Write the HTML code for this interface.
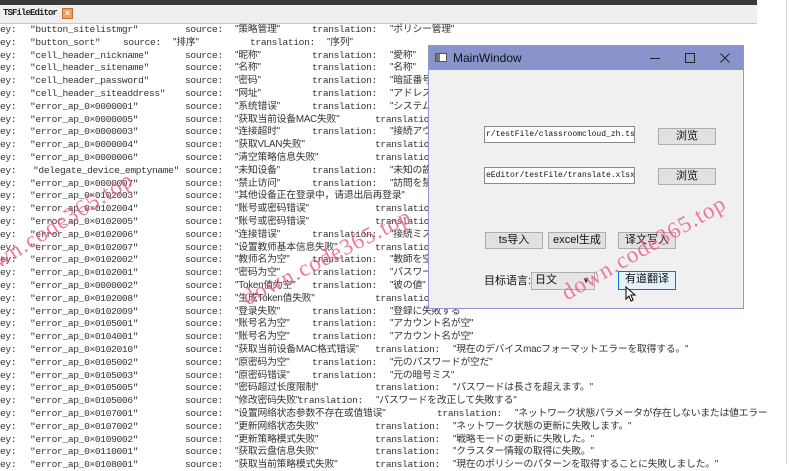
<!DOCTYPE html>
<html><head><meta charset="utf-8"><style>
body{margin:0;width:790px;height:464px;overflow:hidden;background:#fff;position:relative;font-family:"Liberation Mono","Noto Sans CJK SC",monospace;}
.top{position:absolute;left:0;top:0;width:757px;height:5px;background:#3a3a3a}
.tabbar{position:absolute;left:0;top:5px;width:757px;height:18px;background:#efeff1;border-bottom:1px solid #c8c8c8}
.tab{position:absolute;left:3px;top:3px;font:bold 9px "Liberation Mono",monospace;color:#222;letter-spacing:-0.9px;white-space:nowrap}
.tabx{position:absolute;left:62px;top:3px;width:11px;height:11px;background:#f0a060;border:1px solid #c07030;color:#fff;font:bold 9px/9px "Liberation Sans",sans-serif;text-align:center;box-sizing:border-box}
.rline{position:absolute;left:786px;top:0;width:1px;height:464px;background:#d8d8d8}
.r{position:absolute;left:0;height:13px;width:790px;font-size:9.6px;line-height:13px;color:#333;white-space:nowrap;letter-spacing:-0.35px}
.r span{position:absolute;top:0}
.c{font-family:"Liberation Sans","Noto Sans CJK SC",sans-serif;font-size:9.8px;letter-spacing:-0.2px}
.win{position:absolute;left:428px;top:45px;width:316px;height:264px;background:#f0f0f0;border:1px solid #8f98cf;box-sizing:border-box}
.tb{position:absolute;left:0;top:0;width:100%;height:24px;background:#8a94cc}
.tb .t{position:absolute;left:24px;top:5px;font:12px "Liberation Sans",sans-serif;color:#111}
.inp{position:absolute;background:#fff;border:1px solid #8a8a8a;box-sizing:border-box;font:8px/15px "Liberation Mono",monospace;color:#111;padding-left:1px;overflow:hidden;white-space:nowrap;letter-spacing:0}
.btn{position:absolute;background:#e1e1e1;border:1px solid #adadad;box-sizing:border-box;font:11px/15px "Liberation Sans","Noto Sans CJK SC",sans-serif;color:#111;text-align:center}
.wm{position:absolute;font:23px "Liberation Serif",serif;color:rgba(235,90,140,0.8);transform-origin:left bottom;white-space:nowrap;letter-spacing:1px}
</style></head><body>
<div class="top"></div>
<div class="tabbar"><div class="tab">TSFileEditor</div><div class="tabx">×</div></div>
<div class="rline"></div>

<div class="r" style="top:23px"><span>ey:</span><span style="left:30px">"button_sitelistmgr"</span><span style="left:185px">source:</span><span class="c" style="left:235px">"策略管理"</span><span style="left:312px">translation:</span><span class="c" style="left:390px">"ポリシー管理"</span></div>
<div class="r" style="top:36px"><span>ey:</span><span style="left:30px">"button_sort"</span><span style="left:123px">source:</span><span class="c" style="left:173px">"排序"</span><span style="left:250px">translation:</span><span class="c" style="left:327px">"序列"</span></div>
<div class="r" style="top:49px"><span>ey:</span><span style="left:30px">"cell_header_nickname"</span><span style="left:185px">source:</span><span class="c" style="left:235px">"昵称"</span><span style="left:312px">translation:</span><span class="c" style="left:390px">"愛称"</span></div>
<div class="r" style="top:61px"><span>ey:</span><span style="left:30px">"cell_header_sitename"</span><span style="left:185px">source:</span><span class="c" style="left:235px">"名称"</span><span style="left:312px">translation:</span><span class="c" style="left:390px">"名称"</span></div>
<div class="r" style="top:74px"><span>ey:</span><span style="left:30px">"cell_header_password"</span><span style="left:185px">source:</span><span class="c" style="left:235px">"密码"</span><span style="left:312px">translation:</span><span class="c" style="left:390px">"暗証番号"</span></div>
<div class="r" style="top:87px"><span>ey:</span><span style="left:30px">"cell_header_siteaddress"</span><span style="left:185px">source:</span><span class="c" style="left:235px">"网址"</span><span style="left:312px">translation:</span><span class="c" style="left:390px">"アドレス"</span></div>
<div class="r" style="top:100px"><span>ey:</span><span style="left:30px">"error_ap_0×0000001"</span><span style="left:185px">source:</span><span class="c" style="left:235px">"系统错误"</span><span style="left:312px">translation:</span><span class="c" style="left:390px">"システム"</span></div>
<div class="r" style="top:113px"><span>ey:</span><span style="left:30px">"error_ap_0×0000005"</span><span style="left:185px">source:</span><span class="c" style="left:235px">"获取当前设备MAC失败"</span><span style="left:375px">translation:</span></div>
<div class="r" style="top:125px"><span>ey:</span><span style="left:30px">"error_ap_0×0000003"</span><span style="left:185px">source:</span><span class="c" style="left:235px">"连接超时"</span><span style="left:312px">translation:</span><span class="c" style="left:390px">"接続アウト"</span></div>
<div class="r" style="top:138px"><span>ey:</span><span style="left:30px">"error_ap_0×0000004"</span><span style="left:185px">source:</span><span class="c" style="left:235px">"获取VLAN失败"</span><span style="left:375px">translation:</span></div>
<div class="r" style="top:151px"><span>ey:</span><span style="left:30px">"error_ap_0×0000006"</span><span style="left:185px">source:</span><span class="c" style="left:235px">"清空策略信息失败"</span><span style="left:375px">translation:</span></div>
<div class="r" style="top:164px"><span>ey:</span><span style="left:33px">"delegate_device_emptyname"</span><span style="left:185px">source:</span><span class="c" style="left:235px">"未知设备"</span><span style="left:312px">translation:</span><span class="c" style="left:390px">"未知の設備"</span></div>
<div class="r" style="top:177px"><span>ey:</span><span style="left:30px">"error_ap_0×0000007"</span><span style="left:185px">source:</span><span class="c" style="left:235px">"禁止访问"</span><span style="left:312px">translation:</span><span class="c" style="left:390px">"訪問を禁止"</span></div>
<div class="r" style="top:189px"><span>ey:</span><span style="left:30px">"error_ap_0×0102003"</span><span style="left:185px">source:</span><span class="c" style="left:235px">"其他设备正在登录中，请退出后再登录"</span></div>
<div class="r" style="top:202px"><span>ey:</span><span style="left:30px">"error_ap_0×0102004"</span><span style="left:185px">source:</span><span class="c" style="left:235px">"账号或密码错误"</span><span style="left:375px">translation:</span></div>
<div class="r" style="top:215px"><span>ey:</span><span style="left:30px">"error_ap_0×0102005"</span><span style="left:185px">source:</span><span class="c" style="left:235px">"账号或密码错误"</span><span style="left:375px">translation:</span></div>
<div class="r" style="top:228px"><span>ey:</span><span style="left:30px">"error_ap_0×0102006"</span><span style="left:185px">source:</span><span class="c" style="left:235px">"连接错误"</span><span style="left:312px">translation:</span><span class="c" style="left:390px">"接続ミス"</span></div>
<div class="r" style="top:241px"><span>ey:</span><span style="left:30px">"error_ap_0×0102007"</span><span style="left:185px">source:</span><span class="c" style="left:235px">"设置教师基本信息失败"</span><span style="left:375px">translation:</span></div>
<div class="r" style="top:253px"><span>ey:</span><span style="left:30px">"error_ap_0×0102002"</span><span style="left:185px">source:</span><span class="c" style="left:235px">"教师名为空"</span><span style="left:312px">translation:</span><span class="c" style="left:390px">"教師を空"</span></div>
<div class="r" style="top:266px"><span>ey:</span><span style="left:30px">"error_ap_0×0102001"</span><span style="left:185px">source:</span><span class="c" style="left:235px">"密码为空"</span><span style="left:312px">translation:</span><span class="c" style="left:390px">"パスワード"</span></div>
<div class="r" style="top:279px"><span>ey:</span><span style="left:30px">"error_ap_0×0000002"</span><span style="left:185px">source:</span><span class="c" style="left:235px">"Token值为空"</span><span style="left:312px">translation:</span><span class="c" style="left:390px">"彼の値"</span></div>
<div class="r" style="top:292px"><span>ey:</span><span style="left:30px">"error_ap_0×0102008"</span><span style="left:185px">source:</span><span class="c" style="left:235px">"生成Token值失败"</span><span style="left:375px">translation:</span></div>
<div class="r" style="top:305px"><span>ey:</span><span style="left:30px">"error_ap_0×0102009"</span><span style="left:185px">source:</span><span class="c" style="left:235px">"登录失败"</span><span style="left:312px">translation:</span><span class="c" style="left:390px">"登録に失敗する"</span></div>
<div class="r" style="top:317px"><span>ey:</span><span style="left:30px">"error_ap_0×0105001"</span><span style="left:185px">source:</span><span class="c" style="left:235px">"账号名为空"</span><span style="left:312px">translation:</span><span class="c" style="left:390px">"アカウント名が空"</span></div>
<div class="r" style="top:330px"><span>ey:</span><span style="left:30px">"error_ap_0×0104001"</span><span style="left:185px">source:</span><span class="c" style="left:235px">"账号名为空"</span><span style="left:312px">translation:</span><span class="c" style="left:390px">"アカウント名が空"</span></div>
<div class="r" style="top:343px"><span>ey:</span><span style="left:30px">"error_ap_0×0102010"</span><span style="left:185px">source:</span><span class="c" style="left:235px">"获取当前设备MAC格式错误"</span><span style="left:375px">translation:</span><span class="c" style="left:453px">"現在のデバイスmacフォーマットエラーを取得する。"</span></div>
<div class="r" style="top:356px"><span>ey:</span><span style="left:30px">"error_ap_0×0105002"</span><span style="left:185px">source:</span><span class="c" style="left:235px">"原密码为空"</span><span style="left:312px">translation:</span><span class="c" style="left:390px">"元のパスワードが空だ"</span></div>
<div class="r" style="top:369px"><span>ey:</span><span style="left:30px">"error_ap_0×0105003"</span><span style="left:185px">source:</span><span class="c" style="left:235px">"原密码错误"</span><span style="left:312px">translation:</span><span class="c" style="left:390px">"元の暗号ミス"</span></div>
<div class="r" style="top:381px"><span>ey:</span><span style="left:30px">"error_ap_0×0105005"</span><span style="left:185px">source:</span><span class="c" style="left:235px">"密码超过长度限制"</span><span style="left:375px">translation:</span><span class="c" style="left:453px">"パスワードは長さを超えます。"</span></div>
<div class="r" style="top:394px"><span>ey:</span><span style="left:30px">"error_ap_0×0105006"</span><span style="left:185px">source:</span><span class="c" style="left:235px">"修改密码失败"</span><span style="left:298px">translation:</span><span class="c" style="left:376px">"パスワードを改正して失敗する"</span></div>
<div class="r" style="top:407px"><span>ey:</span><span style="left:30px">"error_ap_0×0107001"</span><span style="left:185px">source:</span><span class="c" style="left:235px">"设置网络状态参数不存在或值错误"</span><span style="left:437px">translation:</span><span class="c" style="left:515px">"ネットワーク状態パラメータが存在しないまたは値エラー</span></div>
<div class="r" style="top:420px"><span>ey:</span><span style="left:30px">"error_ap_0×0107002"</span><span style="left:185px">source:</span><span class="c" style="left:235px">"更新网络状态失败"</span><span style="left:375px">translation:</span><span class="c" style="left:453px">"ネットワーク状態の更新に失敗します。"</span></div>
<div class="r" style="top:433px"><span>ey:</span><span style="left:30px">"error_ap_0×0109002"</span><span style="left:185px">source:</span><span class="c" style="left:235px">"更新策略模式失败"</span><span style="left:375px">translation:</span><span class="c" style="left:453px">"戦略モードの更新に失敗した。"</span></div>
<div class="r" style="top:445px"><span>ey:</span><span style="left:30px">"error_ap_0×0110001"</span><span style="left:185px">source:</span><span class="c" style="left:235px">"获取云盘信息失败"</span><span style="left:375px">translation:</span><span class="c" style="left:453px">"クラスター情報の取得に失敗。"</span></div>
<div class="r" style="top:458px"><span>ey:</span><span style="left:30px">"error_ap_0×0108001"</span><span style="left:185px">source:</span><span class="c" style="left:235px">"获取当前策略模式失败"</span><span style="left:375px">translation:</span><span class="c" style="left:453px">"現在のポリシーのパターンを取得することに失敗しました。"</span></div>

<div class="win">
 <div class="tb">
  <div style="position:absolute;left:6px;top:7px;width:12px;height:9px;background:#fff;border:1px solid #555;box-sizing:border-box"></div>
  <div style="position:absolute;left:7px;top:8px;width:4px;height:7px;background:#777"></div>
  <div class="t">MainWindow</div>
  <div style="position:absolute;left:221px;top:12px;width:10px;height:1px;background:#222"></div>
  <div style="position:absolute;left:256px;top:7px;width:10px;height:10px;border:1px solid #222;box-sizing:border-box"></div>
  <svg style="position:absolute;left:291px;top:7px" width="10" height="10"><path d="M0.5 0.5 L9.5 9.5 M9.5 0.5 L0.5 9.5" stroke="#222" stroke-width="1"/></svg>
 </div>
 <div class="inp" style="left:55px;top:80px;width:151px;height:17px">r/testFile/classroomcloud_zh.ts</div>
 <div class="btn" style="left:229px;top:82px;width:58px;height:17px">浏览</div>
 <div class="inp" style="left:55px;top:121px;width:151px;height:17px">eEditor/testFile/translate.xlsx</div>
 <div class="btn" style="left:229px;top:122px;width:58px;height:17px">浏览</div>
 <div class="btn" style="left:56px;top:186px;width:58px;height:17px">ts导入</div>
 <div class="btn" style="left:119px;top:186px;width:58px;height:17px">excel生成</div>
 <div class="btn" style="left:189px;top:186px;width:58px;height:17px">译文写入</div>
 <div style="position:absolute;left:55px;top:226px;font:11px 'Liberation Sans','Noto Sans CJK SC',sans-serif;color:#111">目标语言:</div>
 <div class="btn" style="left:102px;top:226px;width:64px;height:18px;text-align:left;padding-left:3px;background:#e6e6e6">日文<span style="position:absolute;right:4px;top:0;font-size:8px">▼</span></div>
 <div class="btn" style="left:189px;top:225px;width:58px;height:19px;background:#e5f1fb;border-color:#0078d7">有道翻译</div>
 <svg style="position:absolute;left:196px;top:240px" width="12" height="16"><path d="M1 1 L1 13 L4 10 L6 15 L8 14 L6 9 L10 9 Z" fill="#fff" stroke="#000" stroke-width="1"/></svg>
</div>

<div class="wm" style="left:2px;top:248px;transform:rotate(-32deg)">wn.code365.top</div>
<div class="wm" style="left:250px;top:285px;transform:rotate(-27deg)">down.code365.top</div>
<div class="wm" style="left:570px;top:280px;transform:rotate(-30deg)">down.code365.top</div>
</body></html>
